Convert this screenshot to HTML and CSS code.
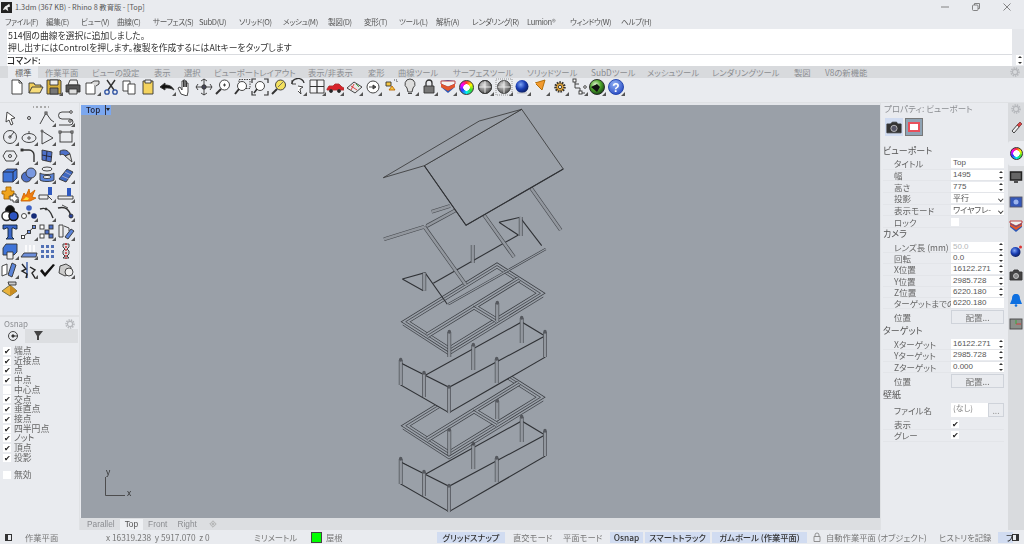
FILE: index.html
```html
<!DOCTYPE html>
<html lang="ja">
<head>
<meta charset="utf-8">
<title>1.3dm - Rhino 8</title>
<link rel="stylesheet" href="styles.css">
</head>
<body>
<svg class="defs" width="0" height="0"><defs>
<radialGradient id="gb" cx=".4" cy=".35" r=".7"><stop offset="0" stop-color="#7fa5f5"/><stop offset=".5" stop-color="#1b3fb5"/><stop offset="1" stop-color="#0a1a55"/></radialGradient>
<radialGradient id="gg" cx=".4" cy=".35" r=".7"><stop offset="0" stop-color="#e9f5d8"/><stop offset=".5" stop-color="#4da52a"/><stop offset="1" stop-color="#123c12"/></radialGradient>
<radialGradient id="gq" cx=".4" cy=".3" r=".8"><stop offset="0" stop-color="#8fb0f5"/><stop offset="1" stop-color="#2144c0"/></radialGradient>
<radialGradient id="gs" cx=".4" cy=".35" r=".8"><stop offset="0" stop-color="#ddd"/><stop offset="1" stop-color="#333"/></radialGradient>
<g id="mk"><path d="M18 18h-4l4-4z" fill="#555" stroke="none"/></g>
<g id="frame">
<polygon points="405.7,321.7 449,349.500 540.500,293.300 497,265.500" class="d5"/>
<polygon points="405.7,321.7 449,349.500 540.500,293.300 497,265.500" class="l5"/>
<polygon points="405.7,321.7 449,349.500 540.500,293.300 497,265.500" class="w"/>
<path d="M427 335.500L519 279M473 306L497 320.500" class="d5"/>
<path d="M427 335.500L519 279M473 306L497 320.500" class="l5"/>
<path d="M427 335.500L519 279M473 306L497 320.500" class="w"/>
<path d="M402.700 325L449 355 543.300 297" class="w"/>
</g>
<g id="cols">
<path d="M449.300 332V357M497.300 303V321" class="dc"/>
<path d="M449.300 332V357M497.300 303V321" class="lc"/>
<path d="M449.300 332V331.500M497.300 303V302.500" class="dot"/>
</g>
<g id="box">
<path d="M424 376L521.700 322 545 336M424 376L400.700 363" class="b"/>
<path d="M521.700 318V343M473.300 345V370" class="dc"/>
<path d="M521.700 318V343M473.300 345V370" class="lc"/>
<polygon points="400.700,363 449,387.300 545,336 545,357.300 449,412.700 400.700,385" class="wall"/>
<path d="M424 373V397M496.700 359V383M400.700 360V385M545 332V357M449 387V413" class="dc"/>
<path d="M424 373V397M496.700 359V383M400.700 360V385M545 332V357M449 387V413" class="lc"/>
<path d="M400.700 360V359.500M424 373V372.500M449 387V386.500M473.300 345V344.500M496.700 359V358.500M521.700 318V317.500M545 332V331.500" class="dot"/>
</g>
</defs></svg>
<div class="app">
<header class="titlebar">
  <svg class="logo" viewBox="0 0 12 12"><path d="M0 0h12v12H0z" fill="#222"/><path d="M2 9c1-3 3-5 4-5l3-2 1 3-3 1 1 4-3-2z" fill="#eee"/></svg>
  <span class="title">1.3dm (367 KB) - Rhino 8 教育版 - [Top]</span>
  <span class="winbtns">
    <svg viewBox="0 0 10 10"><path d="M1 5h8"/></svg>
    <svg viewBox="0 0 10 10"><rect x="1.500" y="3" width="5.500" height="5.500" rx="1"/><path d="M3.500 3V1.500h5v5H7"/></svg>
    <svg viewBox="0 0 10 10"><path d="M1.500 1.500l7 7M8.500 1.500l-7 7"/></svg>
  </span>
</header>
<nav class="menu">
  <span>ファイル(F)</span><span>編集(E)</span><span>ビュー(V)</span><span>曲線(C)</span><span>サーフェス(S)</span><span>SubD(U)</span><span>ソリッド(O)</span><span>メッシュ(M)</span><span>製図(D)</span><span>変形(T)</span><span>ツール(L)</span><span>解析(A)</span><span>レンダリング(R)</span><span>Lumion®</span><span>ウィンドウ(W)</span><span>ヘルプ(H)</span>
</nav>
<section class="cmd">
  <div class="cmd-grip"></div>
  <div class="cmd-main">
    <div class="hist">
      <div>514個の曲線を選択に追加しました。</div>
      <div>押し出すにはControlを押します。複製を作成するにはAltキーをタップします</div>
    </div>
    <div class="prompt">コマンド:</div>
  </div>
  <div class="cmd-side"><div class="cmd-side-top"></div><div class="cmd-spin"><i class="sp"></i></div></div>
</section>
<div class="tabs">
  <span class="on">標準</span><span>作業平面</span><span>ビューの設定</span><span>表示</span><span>選択</span><span>ビューポートレイアウト</span><span>表示/非表示</span><span>変形</span><span>曲線ツール</span><span>サーフェスツール</span><span>ソリッドツール</span><span>SubDツール</span><span>メッシュツール</span><span>レンダリングツール</span><span>製図</span><span>V8の新機能</span>
  <svg class="gear tabgear" viewBox="0 0 10 10"><circle cx="5" cy="5" r="2.600"/><circle cx="5" cy="5" r="4" class="dash"/></svg>
</div>
<div class="toolbar">
  <svg viewBox="0 0 18 18"><path d="M4 2h7l3 3v11H4z" fill="#fff"/><path d="M11 2v3h3"/></svg>
  <svg viewBox="0 0 18 18"><path d="M2 15V5h5l1 2h6v2" fill="#f2cf5c"/><path d="M2 15l3-6h11l-3 6z" fill="#f7dc7a"/></svg>
  <svg viewBox="0 0 18 18"><path d="M2 2h13l1 1v13H2z" fill="#d9b13c"/><path d="M5 2h8v5H5z" fill="#eee"/><path d="M5 10h8v6H5z" fill="#777"/><use href="#mk"/></svg>
  <svg viewBox="0 0 18 18"><path d="M6 2h7l1 5H4z" fill="#eee"/><path d="M2 7h14v7H2z" fill="#555"/><path d="M5 11h8v5H5z" fill="#ddd"/></svg>
  <svg viewBox="0 0 18 18"><path d="M3 5h9v11H3z" fill="#fff"/><path d="M8 5l3-2h5v3l-3 2" fill="#ddd"/><use href="#mk"/></svg>
  <svg viewBox="0 0 18 18"><path d="M5 2l7 10M13 2L6 12" stroke-width="1.400"/><circle cx="5" cy="14" r="2.200" stroke="#2a4fa0" stroke-width="1.300"/><circle cx="13" cy="14" r="2.200" stroke="#2a4fa0" stroke-width="1.300"/></svg>
  <svg viewBox="0 0 18 18"><path d="M3 3h7v10H3z" fill="#fff"/><path d="M8 6h7v10H8z" fill="#fff"/></svg>
  <svg viewBox="0 0 18 18"><path d="M4 3h10v13H4z" fill="#f4d35e"/><path d="M6 2h6v3H6z" fill="#eee"/></svg>
  <svg viewBox="0 0 18 18"><path d="M2 9l5-4v2c4 0 7 1 9 5-3-2-5-2-9-2v2z" fill="#111"/><use href="#mk"/></svg>
  <svg viewBox="0 0 18 18"><path d="M5 16l-3-6 2-1 2 3V3h1.500v6-7h1.500v7-6h1.500v6-4h1.500v9l-1 4z" fill="#fff"/></svg>
  <svg viewBox="0 0 18 18"><path d="M1 9h16M9 1v16M3 6L1 9l2 3M15 6l2 3-2 3M6 3l3-2 3 2M6 15l3 2 3-2"/><circle cx="9" cy="9" r="2.200" fill="#445"/></svg>
  <svg viewBox="0 0 18 18"><circle cx="10.500" cy="7" r="5" fill="#fff"/><path d="M7 11l-5 5" stroke-width="2"/><path d="M9 7h3M10.500 5.500v3"/></svg>
  <svg viewBox="0 0 18 18"><rect x="6" y="1.500" width="11" height="9" stroke-dasharray="1.500 1"/><circle cx="9" cy="8" r="4.500" fill="#fff"/><path d="M6 11l-4 5" stroke-width="2"/></svg>
  <svg viewBox="0 0 18 18"><path d="M1 5V1h4M13 1h4v4M17 13v4h-4M5 17H1v-4" stroke-width="1.200"/><circle cx="9" cy="8" r="4.500" fill="#fff"/><path d="M6 11l-3 4" stroke-width="1.600"/></svg>
  <svg viewBox="0 0 18 18"><circle cx="10.500" cy="7" r="5" fill="#f4e15e"/><path d="M7 11l-5 5" stroke-width="2"/><path d="M8 9l5-5" stroke="#666"/></svg>
  <svg viewBox="0 0 18 18"><path d="M3 6a6 5 0 0 1 12-1" stroke-width="1.300"/><path d="M3 2v4h4"/><path d="M9 8l5 1-3 2 1 5-3-3" fill="#fff"/><use href="#mk"/></svg>
  <svg viewBox="0 0 18 18"><path d="M2 2h14v13H2z" fill="#f4f4f6"/><path d="M2 8.500h14M9 2v13" stroke-width="1.200"/><use href="#mk"/></svg>
  <svg viewBox="0 0 18 18"><path d="M1 11l2-3h4l2-2h4l3 3 2 1v2H1z" fill="#d8222a" stroke="#a33"/><circle cx="5" cy="13" r="1.500" fill="#222"/><circle cx="13" cy="13" r="1.500" fill="#222"/><use href="#mk"/></svg>
  <svg viewBox="0 0 18 18"><path d="M2 10l7-6 8 5-7 6z" fill="#e7e7e7"/><path d="M6 8l6 4M9 6l-3 6" stroke="#d33"/><path d="M11 6l3 3" stroke="#3a3"/><use href="#mk"/></svg>
  <svg viewBox="0 0 18 18"><circle cx="9" cy="9" r="6" fill="#fff"/><path d="M5 9h6"/><path d="M9 7l3 2-3 2z" fill="#555"/><use href="#mk"/></svg>
  <svg viewBox="0 0 18 18"><path d="M3 6h5V2h-5z" fill="#f4c542" transform="translate(1 2)"/><path d="M7 12l3-4 3 4z" fill="#f4c542" stroke="#b60"/><path d="M12 2h3v3" stroke-dasharray="1 1"/><use href="#mk"/></svg>
  <svg viewBox="0 0 18 18"><path d="M9 1a5 5 0 0 1 3 9l-1 4H7l-1-4a5 5 0 0 1 3-9z" fill="#ddd"/><path d="M7 15.500h4"/><use href="#mk"/></svg>
  <svg viewBox="0 0 18 18"><path d="M6 8V5a3 3 0 0 1 6 0v3" stroke-width="1.300"/><path d="M4 8h10v7H4z" fill="#777"/><use href="#mk"/></svg>
  <svg viewBox="0 0 18 18"><path d="M2 3l7-1 7 1v6l-7 6-7-6z" fill="#2d58b5" stroke="none"/><path d="M2 3l14 0v3L9 9 2 6z" fill="#f2f2f2" stroke="#b33"/><path d="M2 6l7 3 7-3v3l-7 4-7-4z" fill="#e3562c" stroke="none"/><use href="#mk"/></svg>
  <span class="ic"><span class="wheel"></span></span>
  <svg viewBox="0 0 18 18"><circle cx="9" cy="9" r="6.500" fill="url(#gs)"/><path d="M2.500 9h13M9 2.500v13" stroke="#eee"/><circle cx="9" cy="9" r="6.500"/><use href="#mk"/></svg>
  <svg viewBox="0 0 18 18"><rect x="1" y="1" width="16" height="16" stroke-dasharray="1 1" stroke="#888"/><circle cx="9" cy="9" r="6.500" fill="url(#gs)"/><path d="M2.500 9h13M9 2.500v13" stroke="#eee"/><use href="#mk"/></svg>
  <svg viewBox="0 0 18 18"><circle cx="9" cy="8.500" r="6.500" fill="url(#gb)" stroke="none"/><path d="M4 15h10" stroke="#bbb"/><use href="#mk"/></svg>
  <svg viewBox="0 0 18 18"><path d="M3 5l10-3-3 10z" fill="#f29a2e" stroke="#a60"/><path d="M1 4l3 2" stroke="#fff"/><use href="#mk"/></svg>
  <svg viewBox="0 0 18 18"><circle cx="9" cy="9" r="4.500" fill="#e3a63a" stroke="#333" stroke-width="2.500" stroke-dasharray="1.500 1"/><circle cx="9" cy="9" r="1.600" fill="#fff"/><use href="#mk"/></svg>
  <svg viewBox="0 0 18 18"><path d="M5 2v8h5v5h5M5 6h4"/><rect x="3" y="1" width="3" height="3" fill="#fff"/><rect x="9" y="13" width="3" height="3" fill="#fff"/><circle cx="15" cy="9" r="1.300" fill="#fff"/><use href="#mk"/></svg>
  <svg viewBox="0 0 18 18"><circle cx="9" cy="9" r="7.500" fill="url(#gg)" stroke="#222"/><path d="M3 9l6-3 3 3-3 5z" fill="#111" stroke="none"/><use href="#mk"/></svg>
  <svg viewBox="0 0 18 18"><circle cx="9" cy="9" r="7.500" fill="url(#gq)" stroke="#1c3ea8"/><text x="9" y="13.500" class="q">?</text><use href="#mk"/></svg>
</div>
<main class="main">
  <aside class="left">
    <div class="tools">
      <div class="grip"></div>
      <div class="toolgrid">
        <svg viewBox="0 0 18 18"><path d="M6 3l8 6-4 1 2 5-2 1-2-5-3 2z" fill="#fff"/></svg>
        <svg viewBox="0 0 18 18"><circle cx="9" cy="9" r="1.500"/></svg>
        <svg viewBox="0 0 18 18"><path d="M2 15L8 4l5 7 3 2"/><rect x="7" y="3" width="2" height="2" fill="#fff"/><use href="#mk"/></svg>
        <svg viewBox="0 0 18 18"><path d="M15 3H5a3 3 0 0 0 0 7h8a3 3 0 0 1 0 6H2"/><circle cx="14" cy="3" r="1.300" fill="#fff"/><circle cx="13" cy="12" r="1.300" fill="#fff"/><use href="#mk"/></svg>
        <svg viewBox="0 0 18 18"><circle cx="9" cy="9" r="6.500"/><circle cx="9" cy="9" r="1.200"/><path d="M9 9l4-5"/><use href="#mk"/></svg>
        <svg viewBox="0 0 18 18"><ellipse cx="9" cy="10" rx="7" ry="4.500"/><circle cx="9" cy="10" r="1.200"/><path d="M9 5V3"/><use href="#mk"/></svg>
        <svg viewBox="0 0 18 18"><path d="M4 3l11 7-11 6z"/><circle cx="4" cy="3" r="1" fill="#fff"/><use href="#mk"/></svg>
        <svg viewBox="0 0 18 18"><rect x="3" y="4" width="12" height="10"/><rect x="2" y="3" width="2" height="2" fill="#fff"/><rect x="14" y="3" width="2" height="2" fill="#fff"/><use href="#mk"/></svg>
        <svg viewBox="0 0 18 18"><path d="M2 9l3-5h8l3 5-3 5H5z"/><circle cx="9" cy="9" r="1.500"/><use href="#mk"/></svg>
        <svg viewBox="0 0 18 18"><path d="M2 3h7a5 5 0 0 1 5 5v7" stroke-width="1.400"/><rect x="1" y="2" width="2" height="2" fill="#333"/><use href="#mk"/></svg>
        <svg viewBox="0 0 18 18"><path d="M4 3l10 2-1 10-9-2z" fill="#4d70c8"/><path d="M9 4l-1 10M4 8l10 2" stroke="#223"/><use href="#mk"/></svg>
        <svg viewBox="0 0 18 18"><path d="M3 4c4-2 8-1 10 3l-5 2C7 7 5 7 3 8z" fill="#4d70c8"/><path d="M8 9l5-2 2 8z" fill="#ddd"/><use href="#mk"/></svg>
        <svg viewBox="0 0 18 18"><path d="M2 6l4-3h10v9l-4 4H2z" fill="#3f74d8" stroke="#334"/><path d="M2 6h10v10M12 6l4-3" stroke="#223"/><use href="#mk"/></svg>
        <svg viewBox="0 0 18 18"><circle cx="6.500" cy="11" r="5" fill="#4d70c8"/><circle cx="11" cy="7" r="5" fill="#7a99e0"/><use href="#mk"/></svg>
        <svg viewBox="0 0 18 18"><ellipse cx="9" cy="3" rx="5" ry="2"/><path d="M2 7v7c2 2 12 2 14 0V7c-2 2-12 2-14 0z" fill="#5b84d8"/><ellipse cx="9" cy="11" rx="4" ry="1.500" fill="#fff"/><use href="#mk"/></svg>
        <svg viewBox="0 0 18 18"><path d="M2 13L10 3l6 3-7 10z" fill="#3e68c0"/><path d="M5 10l7 3M8 6l6 3" stroke="#aac"/><use href="#mk"/></svg>
        <svg viewBox="0 0 18 18"><path d="M1 6h4V2h5v4h3v5H8v3H3V9H1z" fill="#f0a51e" stroke="#a60"/><path d="M9 11h3V9h3v3h2v3h-2v2h-3v-2H9z" fill="#fff"/><use href="#mk"/></svg>
        <svg viewBox="0 0 18 18"><path d="M1 16l3-8 2 3 3-7 1 5 5-4-3 7 4 1-6 3z" fill="#f17d11" stroke="#c60"/><path d="M3 15l3-3 3 1-1 2z" fill="#fd3" stroke="none"/></svg>
        <svg viewBox="0 0 18 18"><path d="M1 10h9v4H1z" fill="#eee"/><path d="M10 2h4v8h-4z" fill="#2f59bf" stroke="none"/><path d="M10 11l4 4"/><use href="#mk"/></svg>
        <svg viewBox="0 0 18 18"><path d="M1 11h15v3H1z" fill="#eee"/><path d="M10 3h4v8h-4z" fill="#2f59bf" stroke="none"/><use href="#mk"/></svg>
        <svg viewBox="0 0 18 18"><circle cx="9" cy="6" r="4.500" fill="#111"/><circle cx="5.500" cy="12" r="4.500" fill="#fff" stroke-width="1.500"/><circle cx="12.500" cy="12" r="4.500" fill="#2c53c0" stroke="#111" stroke-width="1.500"/></svg>
        <svg viewBox="0 0 18 18"><circle cx="9" cy="4" r="2.800" fill="#3d62c5" stroke="none"/><circle cx="4" cy="12" r="2.500" fill="#fff"/><circle cx="9" cy="9" r="1" fill="#333"/><circle cx="14" cy="12" r="2.800" fill="#142a77" stroke="none"/><use href="#mk"/></svg>
        <svg viewBox="0 0 18 18"><path d="M2 5c6-2 10 0 13 9" stroke-width="1.500"/><circle cx="8" cy="5" r="1" fill="#333"/><use href="#mk"/></svg>
        <svg viewBox="0 0 18 18"><path d="M1 4c7-2 12 1 13 10" stroke-width="1.500"/><path d="M5 1l6 3"/><circle cx="14" cy="12" r="2" fill="#29439c"/><use href="#mk"/></svg>
        <svg viewBox="0 0 18 18"><path d="M2 2h14v4h-2l-1-1h-2v9l2 2H5l2-2V5H5L4 6H2z" fill="#3a66c9" stroke="#123"/></svg>
        <svg viewBox="0 0 18 18"><path d="M3 14L14 4"/><rect x="1.500" y="12.500" width="3" height="3" fill="#fff"/><rect x="7.500" y="7.500" width="3" height="3" fill="#6d8fdc"/><rect x="12.500" y="2.500" width="3" height="3" fill="#6d8fdc"/><use href="#mk"/></svg>
        <svg viewBox="0 0 18 18"><rect x="2" y="2" width="4" height="4" fill="#fff"/><rect x="11" y="2" width="4" height="4" fill="#4d70c8"/><rect x="7" y="7" width="4" height="4" fill="#4d70c8"/><rect x="2" y="11" width="4" height="4" fill="#fff"/><rect x="11" y="11" width="4" height="4" fill="#4d70c8"/><use href="#mk"/></svg>
        <svg viewBox="0 0 18 18"><path d="M2 2h4v12H2z" fill="#eee"/><path d="M8 14L14 6l3 2-6 8z" fill="#5b84d8"/><path d="M7 3l5 2 0 3"/><use href="#mk"/></svg>
        <svg viewBox="0 0 18 18"><path d="M2 6l3-4h11v8l-3 3H2z" fill="#3f74d8"/><path d="M6 10h6v7H6z" fill="#eee"/><use href="#mk"/></svg>
        <svg viewBox="0 0 18 18"><path d="M1 15l3-4h13l-1 4z" fill="#6d8fdc"/><path d="M6 3v7M10 3v7M14 3v7" stroke="#fff" stroke-width="1.600"/><use href="#mk"/></svg>
        <svg viewBox="0 0 18 18"><path d="M3 3h3v3H3zM8 3h3v3H8zM13 3h3v3h-3zM3 8h3v3H3zM8 8h3v3H8zM13 8h3v3h-3zM3 13h3v3H3zM8 13h3v3H8zM13 13h3v3h-3z" fill="#5170b5" stroke="none"/></svg>
        <svg viewBox="0 0 18 18"><path d="M6 2h6v3l-2 2 2 2v3l-2 2 2 2H6l2-2-2-2V9l2-2-2-2z" fill="#ddd"/><path d="M9 1v16" stroke="#d2232a" stroke-width="1.300" stroke-dasharray="2 1"/></svg>
        <svg viewBox="0 0 18 18"><path d="M1 5l5-2v10l-5 2z" fill="#fff"/><path d="M7 14l4-12 4 2-4 12z" fill="#5b84d8"/><use href="#mk"/></svg>
        <svg viewBox="0 0 18 18"><path d="M7 1v16" stroke="#2a4fa0" stroke-width="1.300"/><path d="M2 3l4 5-4 2 5 3-1 4M10 6l5 3-3 3 3 5" stroke="#222" stroke-width="1.400"/><use href="#mk"/></svg>
        <svg viewBox="0 0 18 18"><path d="M2 10l2-2 3 4 8-9 2 1-10 12z" fill="#111" stroke="none"/></svg>
        <svg viewBox="0 0 18 18"><path d="M3 5l6-2 5 3v6l-6 3-6-3z" fill="#ccc"/><circle cx="12" cy="11" r="4" fill="#eee"/><use href="#mk"/></svg>
        <svg viewBox="0 0 18 18"><path d="M1 11l8-6 7 6-7 5z" fill="#e9b23c" stroke="#664"/><path d="M9 5l7 6-7 5z" fill="#c98c20" stroke="none"/><path d="M7 2h8v3H8z" fill="#ccc"/><use href="#mk"/></svg>
      </div>
    </div>
    <div class="osnap">
      <div class="panel-head"><span>Osnap</span><svg class="gear" viewBox="0 0 10 10"><circle cx="5" cy="5" r="2.600"/><circle cx="5" cy="5" r="4" class="dash"/></svg></div>
      <div class="osn-tabs">
        <span class="osn-on"><svg viewBox="0 0 12 12"><circle cx="6" cy="6" r="4.500"/><circle cx="6" cy="6" r="1.200" fill="#333"/><path d="M6 6h5"/></svg></span>
        <span class="osn-off"><svg viewBox="0 0 12 12"><path d="M2 1h9L7 6v4H5V6z" fill="#444" stroke="none"/></svg></span>
      </div>
      <ul class="checks">
        <li><i class="ck">✔</i>端点</li><li><i class="ck">✔</i>近接点</li><li><i class="ck">✔</i>点</li><li><i class="ck">✔</i>中点</li><li><i class="ck"></i>中心点</li><li><i class="ck">✔</i>交点</li><li><i class="ck">✔</i>垂直点</li><li><i class="ck">✔</i>接点</li><li><i class="ck">✔</i>四半円点</li><li><i class="ck">✔</i>ノット</li><li><i class="ck">✔</i>頂点</li><li><i class="ck">✔</i>投影</li>
      </ul>
      <div class="disable"><i class="ck"></i>無効</div>
    </div>
  </aside>
  <div class="center">
    <div class="viewport">
      <div class="vp-tab"><span>Top</span><span class="vp-arrow"></span></div>
      <svg class="model" viewBox="81 105 799 413">
        <use href="#box" y="99"/>
        <use href="#frame" y="104"/>
        <use href="#cols" y="98"/>
        <use href="#box"/>
        <use href="#frame"/>
        <use href="#cols"/>
        <path d="M433.300 283.300L518.300 235" class="b"/>
        <path d="M499 222.300L520 217.300 541.700 245.700M499 222.300L518.300 235M402.300 279L425 272.700 447.300 304.300M402.300 279L423.300 290.700" class="b"/>
        <path d="M545.700 249L448.300 304.300" class="d3"/>
        <path d="M545.700 249L448.300 304.300" class="l3"/>
        <path d="M520.700 217V236M424.300 272.700V290.700M472.700 245V263" class="dc"/>
        <path d="M520.700 217V236M424.300 272.700V290.700M472.700 245V263" class="lc"/>
        <path d="M426.700 226L455 210.700M431.700 211.700L450 206M384 239.300L424.300 226.700M424.300 226.700L466 285M484 215L514 257M531 188L560.700 230" class="dc"/>
        <path d="M426.700 226L455 210.700M431.700 211.700L450 206M384 239.300L424.300 226.700M424.300 226.700L466 285M484 215L514 257M531 188L560.700 230" class="lc"/>
        <polygon points="424.300,165.700 521.700,109.300 563.300,169 466,225.300" class="roof"/>
        <polygon points="383.300,177.700 479.300,121 521.700,109.300 424.300,165.700" class="roof"/>
        <path d="M424.300 165.700L466 225.300L563.300 169" class="b"/>
        <path d="M105.500 477V495.500H125" class="axis"/>
        <text x="106" y="475" class="axt">y</text>
        <text x="127" y="496" class="axt">x</text>
      </svg>
    </div>
    <div class="vp-tabs">
      <span>Parallel</span><span class="on">Top</span><span>Front</span><span>Right</span>
      <svg viewBox="0 0 10 10"><path d="M5 1L9 5 5 9 1 5zM3 5h4M5 3v4"/></svg>
    </div>
  </div>
  <aside class="right">
    <div class="panel-head rh"><span>プロパティ: ビューポート</span></div>
    <div class="props">
      <div class="prop-icons">
        <span class="pi on"><svg viewBox="0 0 18 16"><path d="M1 4h4l2-2h5l1 2h4v10H1z" fill="#333"/><circle cx="9" cy="9" r="3.500" fill="#556" stroke="#ccc"/></svg></span>
        <span class="pi vpi"><span></span></span>
      </div>
      <h4 class="hv">ビューポート</h4>
      <div class="r"><label>タイトル</label><span class="f">Top</span></div>
      <div class="r"><label>幅</label><span class="f s">1495</span><i class="sp"></i></div>
      <div class="r"><label>高さ</label><span class="f s">775</span><i class="sp"></i></div>
      <div class="r"><label>投影</label><span class="f sel">平行</span></div>
      <div class="r"><label>表示モード</label><span class="f sel">ワイヤフレ-</span></div>
      <div class="r"><label>ロック</label><i class="ck box"></i></div>
      <h4 class="hc">カメラ</h4>
      <div class="r t"><label>レンズ長 (mm)</label><span class="f s dim">50.0</span><i class="sp"></i></div>
      <div class="r t"><label>回転</label><span class="f s">0.0</span><i class="sp"></i></div>
      <div class="r t"><label>X位置</label><span class="f s">16122.271</span><i class="sp"></i></div>
      <div class="r t"><label>Y位置</label><span class="f s">2985.728</span><i class="sp"></i></div>
      <div class="r t"><label>Z位置</label><span class="f s">6220.180</span><i class="sp"></i></div>
      <div class="r t"><label class="cut">ターゲットまでの</label><span class="f">6220.180</span></div>
      <div class="r b"><label>位置</label><span class="btn">配置...</span></div>
      <h4 class="hc">ターゲット</h4>
      <div class="r t"><label>Xターゲット</label><span class="f s">16122.271</span><i class="sp"></i></div>
      <div class="r t"><label>Yターゲット</label><span class="f s">2985.728</span><i class="sp"></i></div>
      <div class="r t"><label>Zターゲット</label><span class="f s">0.000</span><i class="sp"></i></div>
      <div class="r b"><label>位置</label><span class="btn">配置...</span></div>
      <h4 class="hc">壁紙</h4>
      <div class="r fn"><label>ファイル名</label><span class="f tall">(なし)</span><span class="more">...</span></div>
      <div class="r"><label>表示</label><i class="ck box">✔</i></div>
      <div class="r"><label>グレー</label><i class="ck box">✔</i></div>
    </div>
  </aside>
  <aside class="strip">
    <svg class="stripgear gear" viewBox="0 0 10 10"><circle cx="5" cy="5" r="2.600"/><circle cx="5" cy="5" r="4" class="dash"/></svg>
    <svg viewBox="0 0 14 14"><path d="M3 11l6-7 2 2-6 7z" fill="#eee"/><path d="M8 5l3-3 2 2-3 3z" fill="#d44" stroke="#844"/></svg>
    <span class="st-on"><span class="wheel small"></span></span>
    <svg viewBox="0 0 14 14"><rect x="1.500" y="2" width="11" height="8" fill="#666" stroke="#222" stroke-width="1.500"/><path d="M5 12h4" stroke="#222" stroke-width="1.500"/></svg>
    <svg viewBox="0 0 14 14"><rect x="1" y="2" width="12" height="10" fill="#3558b8" stroke="#556"/><circle cx="7" cy="7" r="2.500" fill="#9bb4ee" stroke="none"/></svg>
    <svg viewBox="0 0 14 14"><path d="M1 2h12v6l-6 5-6-5z" fill="#2d58b5" stroke="none"/><path d="M1 2h12v2L7 7 1 4z" fill="#eee" stroke="#b33"/><path d="M1 5l6 3 6-3v2l-6 4-6-4z" fill="#e3562c" stroke="none"/></svg>
    <svg viewBox="0 0 14 14"><circle cx="6.500" cy="8" r="5" fill="url(#gb)" stroke="none"/><circle cx="11.500" cy="3" r="1.500" fill="#d33" stroke="none"/></svg>
    <svg viewBox="0 0 14 14"><path d="M1 4h3l1-2h4l1 2h3v8H1z" fill="#444"/><circle cx="7" cy="8" r="2.500" fill="#888" stroke="#ccc"/></svg>
    <svg viewBox="0 0 14 14"><path d="M7 1c3 0 4 2 4 5l2 5H1l2-5c0-3 1-5 4-5z" fill="#0d6fe0" stroke="none"/><circle cx="7" cy="12.500" r="1.300" fill="#0d6fe0" stroke="none"/></svg>
    <svg viewBox="0 0 14 14"><rect x="1" y="2" width="12" height="10" fill="#8a8f8a" stroke="#444"/><path d="M7 7h5" stroke="#d33"/><path d="M7 3v4" stroke="#3a3"/></svg>
  </aside>
</main>
<footer class="status">
  <span class="paneicon"><i></i></span>
  <span>作業平面</span>
  <span>x 16319.238&nbsp; y 5917.070&nbsp; z 0</span>
  <span>ミリメートル</span>
  <span class="green"><i></i></span>
  <span>屋根</span>
  <span><b class="hl gs">グリッドスナップ</b></span>
  <span>直交モード</span>
  <span>平面モード</span>
  <span><b class="hl">Osnap</b></span>
  <span><b class="hl">スマートトラック</b></span>
  <span><b class="hl gb">ガムボール (作業平面)</b></span>
  <span><svg class="lock" viewBox="0 0 8 10"><path d="M2 4.500V3a2 2 0 0 1 4 0v1.500M1 4.500h6v5H1z"/></svg></span>
  <span>自動作業平面 (オブジェクト)</span>
  <span>ヒストリを記録</span>
  <span class="filt"><b class="hl2">フ</b><i></i></span>
</footer>
</div>
</body>
</html>
```

FILE: styles.css
```css
* { box-sizing: border-box; margin: 0; padding: 0; }
html, body { width: 1024px; height: 544px; overflow: hidden; background: #e9ebef; }
body { font-family: "Noto Sans CJK JP", "Liberation Sans", sans-serif; font-feature-settings: "palt"; font-size: 8.5px; color: #555; }
.defs { position: absolute; }
.app { width: 1024px; height: 544px; display: flex; flex-direction: column; filter: blur(.42px); }
svg { fill: none; stroke: #333; stroke-width: .9; display: block; }

.titlebar { height: 14px; display: flex; align-items: center; padding-left: 1px; background: #e9ebef; }
.logo { width: 11px; height: 11px; stroke: none; }
.title { margin-left: 3px; font-size: 7.3px; color: #555; flex: 1; }
.winbtns { display: flex; width: 84px; justify-content: space-between; padding-right: 12px; }
.winbtns svg { width: 10px; height: 10px; stroke: #777; stroke-width: .9; }

.menu { height: 15px; display: grid; grid-template-columns: 41px 35px 36px 36px 46px 40px 44px 45px 36px 35px 37px 36px 55px 43px 51px 60px; align-items: center; padding-left: 5px; font-size: 7.6px; letter-spacing: -.35px; color: #555; white-space: nowrap; }

.cmd { height: 37px; display: flex; background: #e9ebef; }
.cmd-grip { width: 7px; }
.cmd-main { flex: 1; display: flex; flex-direction: column; }
.hist { height: 26px; background: #fff; border-bottom: 1px solid #dadce0; color: #333; font-size: 8.8px; line-height: 12px; padding: 1px 0 0 1px; }
.prompt { height: 11px; background: #fff; color: #222; line-height: 11px; font-weight: 500; font-size: 8.8px; }
.cmd-side { width: 12px; }
.cmd-side-top { height: 26px; background: #e4e6ea; }
.cmd-spin { height: 11px; background: #e9ebef; display: flex; justify-content: flex-end; padding-right: 1px; }

.tabs { height: 12px; background: #d8dadd; display: grid; grid-template-columns: 30px 47px 62px 30px 30px 94px 60px 30px 55px 74px 64px 56px 65px 82px 31px 50px 1fr; align-items: center; padding-left: 8px; font-size: 8.3px; color: #8b8d91; white-space: nowrap; position: relative; }
.tabs span { height: 12px; line-height: 12px; padding-left: 7px; }
.tabs .on { background: #e9ebef; color: #666; }
.tabgear { position: absolute; right: 4px; top: 1px; }
.gear { width: 10px; height: 10px; stroke: #b5b7bb; stroke-width: 1.2; }
.gear .dash { stroke-dasharray: 1.4 1; stroke-width: 1.5; }

.toolbar { height: 25px; display: flex; align-items: flex-start; padding: 0 0 0 8px; background: #e9ebef; border-bottom: 1px solid #dfe1e4; }
.toolbar > * { width: 18px; height: 18px; margin-right: .72px; flex: none; }
.ic { display: flex; align-items: center; justify-content: center; }
.wheel { display: block; width: 15px; height: 15px; border-radius: 50%; background: radial-gradient(circle, #fff 0 3px, transparent 3.5px), conic-gradient(#f33, #ff0, #3d3, #0ee, #33f, #f0f, #f33); border: 1px solid #333; }
.wheel.small { width: 13px; height: 13px; }
.q { font: 700 12px "Liberation Sans", sans-serif; fill: #fff; stroke: none; text-anchor: middle; }

.main { flex: 1; display: flex; min-height: 0; }
.left { width: 80px; display: flex; flex-direction: column; border-right: 1px solid #dfe1e4; }
.tools { height: 214px; padding-left: 1px; border-bottom: 2px solid #dfe1e4; }
.grip { height: 5px; margin-top: 1px; background: radial-gradient(circle, #aaa 0 .8px, transparent 1px) center / 4px 4px repeat-x; width: 16px; margin-left: 32px; }
.toolgrid { display: grid; grid-template-columns: repeat(4, 18.5px); grid-auto-rows: 19px; }
.toolgrid svg { width: 18px; height: 18px; }
.osnap { flex: 1; }
.panel-head { height: 11px; margin-top: 1px; display: flex; align-items: center; justify-content: space-between; padding: 0 4px; color: #8b8d91; font-size: 8px; }
.osn-tabs { display: flex; height: 14px; background: #dcdee1; margin-right: 1px; }
.osn-tabs span { width: 25px; display: flex; align-items: center; justify-content: center; }
.osn-tabs svg { width: 12px; height: 12px; }
.osn-on { background: #e9ebef; }
.checks { list-style: none; margin-top: 3px; }
.checks li, .disable { height: 9.72px; display: flex; align-items: center; padding-left: 3px; line-height: 9.7px; color: #666; font-size: 8.8px; }
.disable { margin-top: 7.5px; }
.ck { display: block; width: 8px; height: 8px; background: #fff; margin-right: 3px; font-style: normal; font-size: 8px; line-height: 8px; text-align: center; color: #222; }

.center { flex: 1; display: flex; flex-direction: column; min-width: 0; }
.viewport { flex: 1; background: #9aa0a8; position: relative; margin-left: 1px; border-top: 2px solid #e4e6ea; min-height: 0; }
.vp-tab { position: absolute; left: 0; top: 0; width: 30px; height: 10px; background: #7ba7ef; color: #223; font-size: 8px; line-height: 10px; padding-left: 5px; display: flex; justify-content: space-between; font-weight: 500; z-index: 2; }
.vp-arrow { width: 6px; border-left: 1px solid #334; position: relative; }
.vp-arrow::after { content: ""; position: absolute; left: 0; top: 3px; border: 2px solid transparent; border-top: 3px solid #222; }
.model { position: absolute; inset: 0; width: 100%; height: 100%; }
.w { stroke: #383b40; stroke-width: .75; fill: none; }
.b { stroke: #303236; stroke-width: 1.1; fill: none; }
.wall { fill: #9aa0a8; stroke: #303236; stroke-width: 1.1; }
.roof { fill: #9aa0a8; stroke: #333; stroke-width: .8; }
.d5 { stroke: #3c3f44; stroke-width: 5.5; fill: none; stroke-linejoin: miter; }
.l5 { stroke: #9aa0a8; stroke-width: 4; fill: none; stroke-linejoin: miter; }
.d3 { stroke: #3c3f44; stroke-width: 2.4; fill: none; }
.l3 { stroke: #9aa0a8; stroke-width: 1.2; fill: none; }
.dc { stroke: #474a4f; stroke-width: 3.8; fill: none; }
.lc { stroke: #92979e; stroke-width: 2.5; fill: none; }
.dot { stroke: #55585e; stroke-width: 3.4; stroke-linecap: round; fill: none; }
.axis { stroke: #444; stroke-width: .9; fill: none; }
.axt { font: 8.5px "Liberation Sans", sans-serif; fill: #333; stroke: none; }
.vp-tabs { height: 12px; display: flex; align-items: center; background: #dcdee1; padding-left: 2px; font-size: 8.3px; color: #8b8d91; font-family: "Liberation Sans", sans-serif; }
.vp-tabs span { padding: 0 5px; height: 11px; line-height: 11px; }
.vp-tabs .on { background: #eef0f3; color: #555; }
.vp-tabs svg { width: 8px; height: 8px; margin-left: 7px; stroke: #999; stroke-width: .8; }

.right { width: 128px; border-left: 1px solid #dfe1e4; display: flex; flex-direction: column; }
.rh { margin-top: 0; height: 9px; font-size: 8.5px; padding-left: 3px; }
.props { padding: 0 4px 0 2px; flex: 1; }
.prop-icons { height: 32px; display: flex; padding: 6px 0 0 2px; gap: 2px; }
.pi { width: 18px; height: 18px; display: flex; align-items: center; justify-content: center; }
.pi.on { background: #d1dcf1; }
.pi svg { width: 16px; height: 15px; }
.vpi { background: #8fa3b4; border: 1px solid #777; }
.vpi span { width: 12px; height: 10px; background: #fff; border: 2px solid #e8505c; }
h4 { font-weight: 400; font-size: 9px; height: 13px; line-height: 13px; color: #555; }
.hv { height: 14px; }
.hc { height: 13.5px; line-height: 12px; }
.r { height: 11.7px; display: flex; align-items: center; padding-left: 11px; border-bottom: 1px solid #e3e5e9; color: #666; font-size: 8.5px; }
.r.t { height: 11.3px; }
.r.b { height: 16px; border: 0; }
.r.fn { height: 16px; border: 0; }
.r label { width: 57px; flex: none; white-space: nowrap; overflow: hidden; }
.f { width: 53px; height: 10px; background: #fff; line-height: 10px; padding-left: 2px; color: #555; font-size: 8px; font-family: "Liberation Sans", sans-serif; flex: none; }
.f.sel { position: relative; font-family: inherit; }
.f.sel::after { content: ""; position: absolute; right: 2px; top: 4px; width: 2.5px; height: 2.5px; border: solid #444; border-width: 0 1px 1px 0; transform: rotate(45deg); }
.f.s { width: 46px; }
.f.dim { color: #b5b7ba; }
.f.tall { width: 37px; height: 14px; font-family: inherit; color: #888; }
.sp { display: block; width: 7px; height: 10px; background: #fff; flex: none; position: relative; }
.sp::before, .sp::after { content: ""; position: absolute; left: 1.5px; border: 2px solid transparent; }
.sp::before { top: -1px; border-bottom: 2.5px solid #333; }
.sp::after { bottom: -1px; border-top: 2.5px solid #333; }
.ck.box { margin: 0; }
.btn { width: 53px; height: 14px; background: #e9ebef; border: 1px solid #cfd3da; text-align: center; line-height: 12px; color: #777; flex: none; }
.more { width: 16px; height: 14px; border: 1px solid #cfd3da; text-align: center; line-height: 12px; color: #999; }

.strip { width: 16px; background: #d9dbde; position: relative; display: flex; flex-direction: column; align-items: center; padding-top: 17px; gap: 10.5px; flex: none; }
.strip > svg { width: 14px; height: 14px; }
.stripgear { position: absolute; left: 3px; top: 1px; width: 10px !important; height: 10px !important; }
.st-on { width: 16px; height: 25px; background: #e9ebef; display: flex; align-items: center; justify-content: center; margin: -4px 0 -6px; border-radius: 3px 0 0 3px; }

.status { height: 14px; display: grid; grid-template-columns: 25px 81px 148px 57px 15px 111px 76px 50px 47px 35px 67px 100px 14px 113px 56px 29px; align-items: center; background: #e9ebef; font-size: 8.3px; color: #777; white-space: nowrap; }
.status > span { display: flex; align-items: center; height: 14px; }
.paneicon { padding-left: 5px; }
.paneicon i { display: block; width: 7px; height: 7px; border: 1px solid #333; border-left-width: 3px; }
.green i { display: block; width: 11px; height: 11px; background: #0f0; border: 1px solid #444; }
.hl { flex: 1; text-align: center; font-weight: 500; background: #d1dcf1; color: #333; height: 11px; line-height: 11px; margin-right: 2px; }
.hl.gs { margin-right: 8px; }
.hl.gb { margin-right: 5px; }
.lock { width: 8px; height: 10px; stroke: #888; margin-left: 1px; }
.filt { padding-left: 3px; }
.hl2 { font-weight: 500; background: #d1dcf1; color: #333; width: 15px; height: 11px; line-height: 11px; text-align: right; }
.filt i { display: block; width: 7px; height: 7px; border: 1px solid #333; border-right-width: 3px; margin-left: -1px; }
```
